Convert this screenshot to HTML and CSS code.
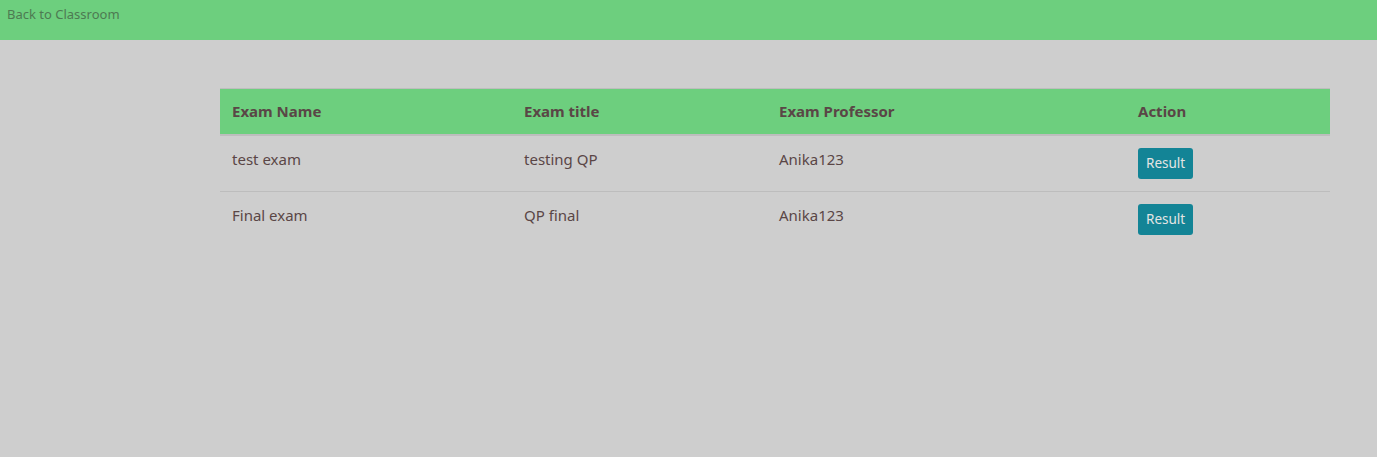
FILE: index.html
```html
<!DOCTYPE html>
<html>
<head>
<meta charset="utf-8">
<link rel="stylesheet" href="styles.css">
</head>
<body>
<nav class="topbar"><a class="back" href="#">Back to Classroom</a></nav>
<main class="content">
  <table class="exams">
    <thead>
      <tr><th class="c1">Exam Name</th><th class="c2">Exam title</th><th class="c3">Exam Professor</th><th class="c4">Action</th></tr>
    </thead>
    <tbody>
      <tr><td>test exam</td><td>testing QP</td><td>Anika123</td><td><button class="btn">Result</button></td></tr>
      <tr><td>Final exam</td><td>QP final</td><td>Anika123</td><td><button class="btn">Result</button></td></tr>
    </tbody>
  </table>
</main>
</body>
</html>
```
FILE: styles.css
```css
html, body { margin: 0; padding: 0; }
body {
  background: #cecece;
  font-family: "Segoe UI", "Noto Sans", "Open Sans", sans-serif;
  color: #5a4646;
  font-size: 15px;
}
.topbar {
  background: #6dcf7e;
  height: 40px;
  padding: 0 7px;
  box-sizing: border-box;
}
.back {
  display: inline-block;
  font-size: 13px;
  line-height: 18px;
  padding-top: 5px;
  color: #4d7a52;
  text-decoration: none;
}
.content {
  padding: 48px 47px 0 220px;
}
.exams {
  width: 1110px;
  border-collapse: collapse;
}
.exams th, .exams td {
  text-align: left;
  padding: 12px;
  line-height: 21px;
  border-top: 1px solid #bdbdbd;
  vertical-align: top;
}
.exams td { line-height: 23px; }
.exams thead th {
  background: #6dcf7e;
  font-weight: bold;
  border-bottom: 2px solid #bdbdbd;
}
.c1 { width: 268px; }
.c2 { width: 231px; }
.c3 { width: 335px; }
.btn {
  background: #138496;
  color: #e4e4e4;
  border: none;
  border-radius: 3px;
  font-family: inherit;
  font-size: 13.5px;
  line-height: 21px;
  padding: 5px 8px;
  display: block;
}
```
